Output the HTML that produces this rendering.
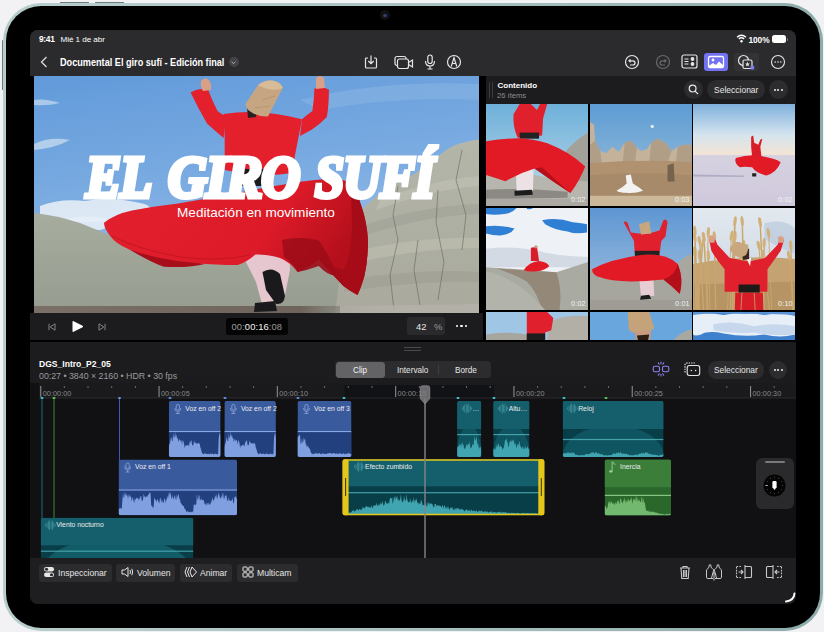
<!DOCTYPE html>
<html><head><meta charset="utf-8">
<style>
*{box-sizing:border-box;margin:0;padding:0}
html,body{width:824px;height:632px;overflow:hidden;background:#f2f2f4}
body{position:relative;font-family:"Liberation Sans",sans-serif;color:#fff}
.a{position:absolute}
#frame{left:2.8px;top:3px;width:820.4px;height:628px;border-radius:38px;background:linear-gradient(90deg,#b6cdcc,#a9c2c1 50%,#8cabaa)}
#bezel{left:6px;top:5.5px;width:814px;height:622.5px;border-radius:35px;background:#000}
#scr{left:0;top:0;width:824px;height:632px;clip-path:inset(30px 28px 28px 30px round 8px);background:#1c1c1e}
.t{position:absolute;white-space:nowrap;line-height:1}
</style></head>
<body>
<div id="frame" class="a"></div>
<div id="bezel" class="a"></div>
<div class="a" style="left:1.8px;top:40px;width:1px;height:50px;border-radius:1px;background:#4a5a62;opacity:0.8"></div>
<div class="a" style="left:60px;top:1.8px;width:29px;height:1px;border-radius:1px;background:#4a5a62;opacity:0.8"></div>
<div class="a" style="left:95px;top:1.8px;width:29px;height:1px;border-radius:1px;background:#4a5a62;opacity:0.8"></div>

<div class="a" style="left:380px;top:10px;width:10px;height:10px;border-radius:50%;background:#111;"></div>
<div class="a" style="left:383px;top:13.5px;width:4px;height:3px;border-radius:50%;background:#34407a;"></div>

<div id="scr" class="a">
  <!-- top bar -->
  <div class="a" style="left:30px;top:30px;width:766px;height:46px;background:#2b2b2d"></div>
  
  <!-- status -->
  <div class="t" style="left:39px;top:35px;font-size:8.4px;font-weight:bold;letter-spacing:-0.3px">9:41</div>
  <div class="t" style="left:60.5px;top:35.5px;font-size:8.1px;letter-spacing:-0.05px">Mié 1 de abr</div>
  <div class="t" style="left:748.5px;top:35.5px;font-size:8.4px;font-weight:bold;letter-spacing:-0.1px">100%</div>
  <svg class="a" style="left:736px;top:34px" width="11" height="9" viewBox="0 0 11 9"><path d="M1 3.2 Q5.5 -0.8 10 3.2" stroke="#fff" stroke-width="1.3" fill="none"/><path d="M2.8 5 Q5.5 2.6 8.2 5" stroke="#fff" stroke-width="1.3" fill="none"/><circle cx="5.5" cy="7.2" r="1.2" fill="#fff"/></svg>
  <div class="a" style="left:772px;top:35px;width:14px;height:8px;border-radius:2.5px;background:#fff"></div>
  <div class="a" style="left:787px;top:37.5px;width:1.2px;height:3px;border-radius:1px;background:#777"></div>
  <!-- title -->
  <svg class="a" style="left:40px;top:56px" width="8" height="12" viewBox="0 0 8 12"><path d="M6.5 1 L1.5 6 L6.5 11" stroke="#ddd" stroke-width="1.3" fill="none"/></svg>
  <div class="t" style="left:60px;top:57px;font-size:10.6px;font-weight:bold;transform:scaleX(0.862);transform-origin:0 0">Documental El giro sufí - Edición final</div>
  <div class="a" style="left:229px;top:57.3px;width:9.8px;height:9.8px;border-radius:50%;background:#444446"></div>
  <svg class="a" style="left:228.4px;top:56.7px" width="11" height="11" viewBox="0 0 11 11"><path d="M3.6 4.8 L5.5 6.6 L7.4 4.8" stroke="#b0b0b2" stroke-width="1" fill="none"/></svg>
  <!-- center icons -->
  <svg class="a" style="left:363px;top:54px" width="16" height="16" viewBox="0 0 16 16" fill="none" stroke="#e6e6e6" stroke-width="1.2"><path d="M5 4 H3.5 Q2.5 4 2.5 5 V13 Q2.5 14 3.5 14 H12.5 Q13.5 14 13.5 13 V5 Q13.5 4 12.5 4 H11"/><path d="M8 1.5 V9.5 M5.3 7 L8 9.7 L10.7 7"/></svg>
  <svg class="a" style="left:394px;top:55px" width="20" height="15" viewBox="0 0 20 15" fill="none" stroke="#e6e6e6" stroke-width="1.2"><rect x="1" y="1.5" width="11" height="9" rx="2"/><rect x="3.5" y="4" width="11" height="9.5" rx="2" fill="#2b2b2d"/><path d="M14.5 7.5 L18.5 5 V12 L14.5 9.5"/></svg>
  <svg class="a" style="left:424px;top:54px" width="12" height="16" viewBox="0 0 12 16" fill="none" stroke="#e6e6e6" stroke-width="1.2"><rect x="3.8" y="1" width="4.4" height="8.5" rx="2.2"/><path d="M1.5 7 Q1.5 12 6 12 Q10.5 12 10.5 7 M6 12 V15 M3.5 15 H8.5"/></svg>
  <svg class="a" style="left:446px;top:54px" width="16" height="16" viewBox="0 0 16 16" fill="none" stroke="#e6e6e6" stroke-width="1.2"><circle cx="8" cy="8" r="6.5"/><path d="M5.2 12.5 L8 3.8 L10.8 12.5 M6.2 9.5 H9.8"/></svg>
  <!-- right icons -->
  <svg class="a" style="left:624px;top:54px" width="16" height="16" viewBox="0 0 16 16" fill="none" stroke="#e6e6e6" stroke-width="1.2"><circle cx="8" cy="8" r="6.5"/><path d="M6.5 5.3 L5 6.8 L6.5 8.3 M5.2 6.8 H8.8 Q11 6.8 11 9 Q11 11 8.8 11 H6"/></svg>
  <svg class="a" style="left:655px;top:54px" width="16" height="16" viewBox="0 0 16 16" fill="none" stroke="#6a6a6c" stroke-width="1.2"><circle cx="8" cy="8" r="6.5"/><path d="M9.5 5.3 L11 6.8 L9.5 8.3 M10.8 6.8 H7.2 Q5 6.8 5 9 Q5 11 7.2 11 H10"/></svg>
  <svg class="a" style="left:681px;top:54px" width="17" height="15" viewBox="0 0 17 15" fill="none" stroke="#e6e6e6" stroke-width="1.2"><rect x="1" y="1" width="15" height="13" rx="2"/><path d="M3.5 5 H7.5 M3.5 7.5 H7.5 M3.5 10 H7.5"/><circle cx="11.5" cy="5" r="1.3" fill="#e6e6e6"/><circle cx="11.5" cy="10" r="1.3" fill="#e6e6e6"/></svg>
  <div class="a" style="left:704px;top:53px;width:24px;height:18px;border-radius:3px;background:#7272f2"></div>
  <svg class="a" style="left:707px;top:55px" width="18" height="14" viewBox="0 0 18 14" fill="none" stroke="#fff" stroke-width="1.3"><rect x="1.5" y="1.5" width="15" height="11" rx="1.5"/><circle cx="6" cy="5" r="1.4" fill="#fff" stroke="none"/><path d="M1.5 11 L6 8 L9 10 L12 6.5 L16.5 10.5 V12.5 H1.5 Z" fill="#fff" stroke="none"/></svg>
  <div class="a" style="left:734px;top:53px;width:25px;height:18px;border-radius:3px;background:#333335"></div>
  <svg class="a" style="left:737px;top:54px" width="18" height="16" viewBox="0 0 18 16" fill="none" stroke="#e6e6e6" stroke-width="1.2"><circle cx="6.5" cy="6.5" r="5"/><rect x="6" y="6" width="9" height="8.5" rx="1.5" fill="#333335"/><path d="M10.5 7.8 L11.2 9.4 L12.8 9.5 L11.6 10.6 L12 12.2 L10.5 11.4 L9 12.2 L9.4 10.6 L8.2 9.5 L9.8 9.4 Z" fill="#e6e6e6" stroke="none"/><circle cx="15.3" cy="13.7" r="2.1" fill="#7c7cf4" stroke="none"/></svg>
  <svg class="a" style="left:769.5px;top:54px" width="16" height="16" viewBox="0 0 16 16" fill="none" stroke="#e6e6e6" stroke-width="1.1"><circle cx="8" cy="8" r="6.5"/><circle cx="5.2" cy="8" r="0.8" fill="#e6e6e6" stroke="none"/><circle cx="8" cy="8" r="0.8" fill="#e6e6e6" stroke="none"/><circle cx="10.8" cy="8" r="0.8" fill="#e6e6e6" stroke="none"/></svg>

  <!-- viewer bg -->
  <div class="a" style="left:30px;top:76px;width:456px;height:266px;background:#000"></div>
  
  <!--VID-->  <svg class="a" style="left:34px;top:76px" width="445" height="237" viewBox="34 76 445 237">
    <defs>
      <linearGradient id="sky" x1="0" y1="0" x2="0.25" y2="1">
        <stop offset="0" stop-color="#619ada"/><stop offset="0.55" stop-color="#7dade2"/><stop offset="1" stop-color="#abc8e8"/>
      </linearGradient>
      <linearGradient id="hillL" x1="0" y1="0" x2="0" y2="1">
        <stop offset="0" stop-color="#a6ad9f"/><stop offset="1" stop-color="#969d90"/>
      </linearGradient>
      <linearGradient id="hillR" x1="0" y1="0" x2="0" y2="1">
        <stop offset="0" stop-color="#b4b6aa"/><stop offset="1" stop-color="#a9a99d"/>
      </linearGradient>
      <linearGradient id="skirt" x1="0" y1="0" x2="1" y2="0.3">
        <stop offset="0" stop-color="#e2202e"/><stop offset="0.7" stop-color="#dc1a28"/><stop offset="1" stop-color="#b50f1c"/>
      </linearGradient>
    </defs>
    <rect x="34" y="76" width="445" height="237" fill="url(#sky)"/>
    <!-- wispy clouds -->
    <path d="M34 100 Q45 98 60 103 Q48 106 34 105 Z" fill="#c8dcf0" opacity="0.7"/>
    <path d="M34 144 Q50 136 70 140 Q55 148 34 150 Z" fill="#d0e0f0" opacity="0.7"/>
    <path d="M40 206 Q60 198 85 201 Q110 196 140 203 Q155 206 150 214 Q120 222 80 222 Q50 222 40 214 Z" fill="#e6eef6" opacity="0.9"/><path d="M60 221 Q80 214 105 218 Q115 226 100 230 Q80 230 60 226 Z" fill="#e6eef6" opacity="0.9"/>
    <path d="M300 100 Q380 80 479 84 L479 100 Q400 96 320 110 Z" fill="#8cb6e4" opacity="0.5"/>
    <!-- left hill / ground -->
    <path d="M34 213 Q55 215 80 223 Q110 235 140 248 Q200 262 260 262 Q320 258 370 250 L479 250 L479 313 L34 313 Z" fill="url(#hillL)"/>
    <!-- right hill -->
    <path d="M335 313 L342 262 Q350 230 363 208 Q380 192 398 182 Q410 176 415 173.5 Q425 165 435.6 159 Q445 150 453 146 Q465 141 479 139.5 L479 313 Z" fill="url(#hillR)"/>
    <path d="M380 200 Q430 180 479 176 L479 186 Q430 190 376 210 Z" fill="#c2c2b6" opacity="0.6"/>
    <path d="M362 226 Q420 206 479 204 L479 214 Q420 216 358 238 Z" fill="#9c9e92" opacity="0.45"/>
    <path d="M352 252 Q420 236 479 238 L479 248 Q420 248 350 264 Z" fill="#c4c2b4" opacity="0.5"/>
    <path d="M346 280 Q420 268 479 272 L479 282 Q420 280 344 292 Z" fill="#9a998e" opacity="0.45"/>
    <g stroke="#5f5c55" stroke-width="0.7" fill="none" opacity="0.75">
      <path d="M398 186 L393 215 L398 240 L390 275 L394 310"/><path d="M438 190 L436 222 L444 262 L438 300"/><path d="M462 150 L456 180 L466 215 L462 250"/><path d="M418 240 L414 270 L420 305"/>
    </g>
    <linearGradient id="gband" x1="0" y1="0" x2="1" y2="0"><stop offset="0" stop-color="#7a7068"/><stop offset="0.6" stop-color="#6e645c"/><stop offset="0.78" stop-color="#8c877e" stop-opacity="0"/></linearGradient><rect x="34" y="306" width="445" height="7" fill="url(#gband)"/>
    <path d="M340 306 L479 304 L479 313 L340 313 Z" fill="#b4b2aa" opacity="0.8"/>
    <!-- under-skirt dark fold -->
    <path d="M128.7 249 Q150 262 164 266.8 Q190 268 205 264 Q170 258 128.7 249 Z" fill="#a80d1a"/>
    <!-- pants -->
    <path d="M245 236 L289 234 L290 270 L284 300 L262 304 L256 282 L246 262 Z" fill="#e6c6cf"/>
    <!-- skirt -->
    <path d="M104 222.8 Q115 214 132 210.5 Q155 206 178 203.4 Q205 199 230.8 194.6 Q260 188 287 184 Q315 179 333 178.8 Q345 179 350.5 184 Q357 192 361 205 Q367 222 368 240.4 Q368 260 364.5 275.6 Q361 288 357.5 295 Q350 291 343.4 286 Q330 272 318.8 259.8 Q308 268 297.7 272 Q290 262 280 258 Q268 254 255.4 254.5 Q247 262 237.8 265 Q215 265 195.6 263 Q178 262 160.4 258 Q142 254 128.7 249.2 Q115 243 111 236.9 Q104 229 104 222.8 Z" fill="url(#skirt)"/>
    <path d="M318.8 259.8 Q330 272 343.4 286 Q350 291 357.5 295 Q361 288 364.5 275.6 Q368 260 368 240.4 Q367 222 361 205 Q357 192 350.5 184 Q352 205 352 230 Q350 262 343 270 Q332 266 318.8 259.8 Z" fill="#a50c18"/>
    <path d="M112 236 Q140 250 180 257 Q220 262 250 255" stroke="#b8101c" stroke-width="1" fill="none" opacity="0.6"/>
    <path d="M282 240 Q300 236 318.8 240.4 Q330 255 336.4 275.6 Q328 276 318.8 266 Q308 270 297.7 272 Q292 262 284 257 Z" fill="#9e0c18" opacity="0.9"/>
    <!-- shoes -->
    <path d="M262.5 272 Q272 266 280 274 L285 296 Q284 305 276 304 L266 290 Z" fill="#1a1a1c"/>
    <path d="M255 303 L275 301 L277 311 L254 312 Z" fill="#1a1a1c"/>
    <!-- torso -->
    <path d="M223.6 114 Q260 108 302 119.3 L296 150 L291.7 173 Q260 178 224.7 170 L224.7 138 Z" fill="#e3202c"/>
    <path d="M238 169 L273 169 L273 186 L238 186 Z" fill="#1c1a1c"/>
    <!-- left arm -->
    <path d="M190.6 92.5 Q198 88 208 89.4 Q212 100 217.5 111 Q221 114 225.7 116 L223.6 138 Q214 130 207 123.5 Q198 108 190.6 92.5 Z" fill="#e3202c"/>
    <!-- right arm -->
    <path d="M314.4 88.4 Q322 86 328.9 89.4 Q329 105 326.8 117 Q320 124 312 129.6 L300 136 L302 119.3 Q308 114 312.4 111 Q314 100 314.4 88.4 Z" fill="#e3202c"/>
    <!-- hands -->
    <path d="M201 81 Q205 76 209 80 Q212 84 211 90 L203 91 Q200 86 201 81 Z" fill="#d9a088"/>
    <path d="M316 78 Q320 74 324 78 L325 88 L316 89 Z" fill="#d9a088"/>
    <!-- face/beard -->
    <path d="M247 107 L256.7 108 L256 117 L248 118 Z" fill="#2a2020"/>
    <!-- hat -->
    <path d="M245.5 104 L258 85 Q264 80 272 80.5 Q281 82 282.8 88 L268 116.5 Q258 117 251 112 Q246 109 245.5 104 Z" fill="#c6a682"/>
    <path d="M258 85 Q264 80 272 80.5 Q281 82 282.8 88 Q276 91 268 89 Q261 87 258 85 Z" fill="#d8bc98"/>
    <path d="M262 100 L275 96 M255 108 L270 106" stroke="#b39270" stroke-width="0.8"/>
  </svg>
<!--/VID-->
  <div class="a" style="left:34px;top:76px;width:445px;height:237px;overflow:hidden">
  <div class="t" style="left:52.2px;top:71.9px;font-family:'Liberation Serif',serif;font-weight:bold;font-style:italic;font-size:60px;letter-spacing:-1px;-webkit-text-stroke:5px #fff;transform-origin:0 0;transform:scale(0.874,0.97)">EL</div>
  <div class="t" style="left:133.6px;top:71.9px;font-family:'Liberation Serif',serif;font-weight:bold;font-style:italic;font-size:60px;letter-spacing:-1px;-webkit-text-stroke:5px #fff;transform-origin:0 0;transform:scale(0.90,0.97)">GIRO</div>
  <div class="t" style="left:281.2px;top:71.9px;font-family:'Liberation Serif',serif;font-weight:bold;font-style:italic;font-size:60px;letter-spacing:-1px;-webkit-text-stroke:5px #fff;transform-origin:0 0;transform:scale(0.873,0.97)">SUFÍ</div>
  <div class="t" style="left:143px;top:130px;font-size:13.6px;">Meditación en movimiento</div>
  </div>

  <!-- controls bar -->
  <div class="a" style="left:30px;top:313px;width:452.6px;height:27px;background:#1c1c1e"></div>
  <svg class="a" style="left:47.5px;top:323px" width="8" height="8" viewBox="0 0 8 8" fill="none" stroke="#8e8e90" stroke-width="0.9" stroke-linejoin="round"><path d="M1 0.8 V7.2 M7 0.8 L2.2 4 L7 7.2 Z"/></svg>
  <svg class="a" style="left:70.5px;top:320px" width="13" height="13" viewBox="0 0 13 13"><path d="M1.5 1.8 Q1.5 0.6 2.6 1.2 L11.6 5.8 Q12.6 6.5 11.6 7.2 L2.6 11.8 Q1.5 12.4 1.5 11.2 Z" fill="#fff"/></svg>
  <svg class="a" style="left:97.5px;top:323px" width="8" height="8" viewBox="0 0 8 8" fill="none" stroke="#8e8e90" stroke-width="0.9" stroke-linejoin="round"><path d="M7 0.8 V7.2 M1 0.8 L5.8 4 L1 7.2 Z"/></svg>
  <div class="a" style="left:225.6px;top:317.6px;width:62.2px;height:17.7px;border-radius:3px;background:#050505"></div>
  <div class="t" style="left:231.5px;top:321.5px;font-size:9.4px;color:#9c9c9e;letter-spacing:0.1px">00:<span style="color:#f4f4f4">00:16</span>:08</div>
  <div class="a" style="left:407px;top:317px;width:38px;height:18px;border-radius:3px;background:#2a2a2c"></div>
  <div class="t" style="left:416px;top:321.5px;font-size:9.4px;color:#e6e6e6">42</div>
  <div class="t" style="left:434px;top:321.5px;font-size:9.4px;color:#9a9a9c">%</div>
  <div class="a" style="left:455.9px;top:324.7px;width:2.6px;height:2.6px;border-radius:50%;background:#fff"></div>
  <div class="a" style="left:460.2px;top:324.7px;width:2.6px;height:2.6px;border-radius:50%;background:#fff"></div>
  <div class="a" style="left:464.5px;top:324.7px;width:2.6px;height:2.6px;border-radius:50%;background:#fff"></div>

  <!-- content header -->
  <div class="a" style="left:486px;top:76px;width:310px;height:266px;background:#000"></div><!--TH--><svg class="a" style="left:486px;top:104px" width="102" height="102" viewBox="0 0 100 100.00" preserveAspectRatio="none"><defs><linearGradient id="t1s" x1="0" y1="0" x2="0" y2="1"><stop offset="0" stop-color="#6eb0da"/><stop offset="1" stop-color="#c0dcea"/></linearGradient></defs>
<rect width="100" height="100" fill="url(#t1s)"/>
<path d="M66 100 L70 58 Q80 40 100 28 L100 100 Z" fill="#a2a29a"/>
<path d="M0 60 Q30 66 60 72 L100 76 L100 100 L0 100 Z" fill="#b6b5ae"/>
<path d="M0 84 Q40 82 80 86 L80 92 Q40 93 0 93 Z" fill="#6a6562" opacity="0.55"/>
<rect x="0" y="93" width="100" height="7" fill="#aba9a2"/>
<path d="M29 54 L47 54 L46 85 L30 86 Z" fill="#ece2e6"/>
<path d="M28 85 L45 84 L46 89 L28 90 Z" fill="#1c1c1c"/>
<path d="M27 10 L33 0 L44 0 L50 6 L53 0 L60 0 L56 14 L55 31 L31 33 Q26 22 27 10 Z" fill="#e0202c"/>
<rect x="33" y="28" width="19" height="6" fill="#222"/>
<path d="M0 36.6 Q16 34 31.3 33.6 Q46 34 60.2 38.6 Q82 47 97.3 61.3 Q92 75 82.8 87.3 Q64 75 47.7 63.3 Q32 68 18.9 75.8 Q8 72 0 69.6 Z" fill="#e21a26"/>
<path d="M47.7 63.3 Q64 75 82.8 87.3 Q70 76 55 62 Z" fill="#b50f1a"/>
</svg><div class="t" style="left:571px;top:196px;font-size:7.2px;color:#f4f4f4;letter-spacing:0.2px">0:02</div>
<svg class="a" style="left:590px;top:104px" width="102" height="102" viewBox="0 0 100 100.00" preserveAspectRatio="none"><defs><linearGradient id="t2s" x1="0" y1="0" x2="0" y2="1"><stop offset="0" stop-color="#5d9cd4"/><stop offset="1" stop-color="#a4c4da"/></linearGradient></defs>
<rect width="100" height="100" fill="url(#t2s)"/>
<circle cx="61" cy="22" r="1.6" fill="#e8eef4"/>
<path d="M0 18 L4 20 L5 36 L10 46 L16 48 L22 42 L28 47 L30 44 L34 38 L40 36 L46 43 L50 46 L56 44 L60 38 L66 34 L74 38 L80 46 L86 42 L92 40 L100 40 L100 100 L0 100 Z" fill="#c4b29a"/>
<path d="M5 36 L10 46 L12 60 L0 62 L0 40 Z M34 38 L40 36 L46 43 L44 58 L32 58 Z M60 38 L66 34 L74 38 L80 46 L76 58 L58 58 Z M86 42 L92 40 L100 40 L100 58 L84 58 Z" fill="#a8947c" opacity="0.65"/>
<path d="M0 58 Q50 54 100 57 L100 100 L0 100 Z" fill="#b09270"/>
<path d="M0 70 Q50 66 100 70 L100 90 L0 90 Z" fill="#9e8262" opacity="0.5"/>
<path d="M76 60 L82 58 L83 76 L76 76 Z" fill="#75634e"/>
<rect x="0" y="90" width="100" height="10" fill="#cbb89a"/>
<path d="M35 70 L40 69 L42 78 Q50 83 52 85 Q44 88 36 87 Q29 87 26 85 Q32 82 36 78 Z" fill="#f2f2f2"/>
</svg><div class="t" style="left:675px;top:196px;font-size:7.2px;color:#f4f4f4;letter-spacing:0.2px">0:03</div>
<svg class="a" style="left:693px;top:104px" width="102" height="102" viewBox="0 0 100 100.00" preserveAspectRatio="none"><defs><linearGradient id="t3s" x1="0" y1="0" x2="0" y2="1"><stop offset="0" stop-color="#7fb0dc"/><stop offset="0.6" stop-color="#d4e4ee"/><stop offset="1" stop-color="#f3e4d4"/></linearGradient>
<linearGradient id="t3g" x1="0" y1="0" x2="0" y2="1"><stop offset="0" stop-color="#d6d2e0"/><stop offset="1" stop-color="#cfc8dc"/></linearGradient></defs>
<rect width="100" height="50" fill="url(#t3s)"/>
<rect y="50" width="100" height="50" fill="url(#t3g)"/>
<path d="M0 69 L50 70 L50 71.5 L0 71 Z" fill="#a0a0bc" opacity="0.7"/>
<path d="M57 32 L59 31 L60 38 L64 40 L66 35 L68 34 L66 42 L67 51 L58 52 L57 42 Z" fill="#d81c28"/>
<path d="M42 53 Q55 49 66 51 Q80 53 86 57 Q82 67 72 70 Q62 68 58 62 Q50 61 46 62 Q40 58 42 53 Z" fill="#e21a26"/>
<path d="M58 68 L62 68 L62 71 L58 71 Z" fill="#222"/></svg><div class="t" style="left:778px;top:196px;font-size:7.2px;color:#f4f4f4;letter-spacing:0.2px">0:02</div>
<svg class="a" style="left:486px;top:208px" width="102" height="102" viewBox="0 0 100 100.00" preserveAspectRatio="none"><rect width="100" height="100" fill="#eef2f6"/>
<path d="M0 0 H30 Q26 5 18 6 Q8 7 0 6 Z" fill="#2f7fd4"/>
<path d="M40 0 H46 Q44 2 40 1 Z" fill="#2f7fd4"/>
<path d="M0 18 Q12 16 28 20 Q24 26 14 27 Q6 27 0 25 Z" fill="#2f80d4"/>
<path d="M55 12 Q70 9 85 14 Q95 15 99 16 L99 24 Q88 26 80 23 Q68 22 58 16 Z" fill="#2f80d4"/>
<path d="M30 42 Q34 40 38 42 Q34 46 30 45 Z" fill="#4a8ed6"/>
<path d="M0 40 Q30 36 60 44 Q80 48 100 48 L100 58 L0 58 Z" fill="#d4dae4"/>
<path d="M0 58 Q35 60 69 63 Q85 58 100 53 L100 100 L0 100 Z" fill="#a9aaa2"/>
<path d="M10 59 Q40 62 69 63 Q75 80 72 100 L55 100 Q50 82 40 72 Q25 64 10 59 Z" fill="#8e7c6a" opacity="0.75"/>
<path d="M0 62 Q30 68 58 100 L0 100 Z" fill="#b2b3ab"/>
<path d="M44 39 L50 38 L52 52 L44 52 Z" fill="#d81c28"/>
<circle cx="49" cy="38" r="1.6" fill="#c89a80"/>
<path d="M37 61 Q42 53 52 52 Q60 53 62 57 Q58 61 50 62 Q42 63 37 61 Z" fill="#e21a26"/></svg><div class="t" style="left:571px;top:300px;font-size:7.2px;color:#f4f4f4;letter-spacing:0.2px">0:02</div>
<svg class="a" style="left:590px;top:208px" width="102" height="102" viewBox="0 0 100 100.00" preserveAspectRatio="none"><defs><linearGradient id="t5s" x1="0" y1="0" x2="0" y2="1"><stop offset="0" stop-color="#5e96d2"/><stop offset="1" stop-color="#a6c4e0"/></linearGradient></defs>
<rect width="100" height="100" fill="url(#t5s)"/>
<path d="M78 100 L80 60 Q90 48 100 45 L100 100 Z" fill="#a8a8a0"/>
<path d="M0 60 Q40 66 80 70 L100 72 L100 100 L0 100 Z" fill="#a6a69e"/>
<rect y="90" width="100" height="10" fill="#9e9c94"/>
<path d="M48 66 L62 64 L63 86 L50 87 Z" fill="#e8ccd4"/>
<path d="M50 86 L58 85 L60 89 L49 90 Z" fill="#1c1c1c"/>
<path d="M33 14 Q36 12 37 15 L40 24 L48 25 L58 25 L68 22 L72 12 Q75 10 76 14 L74 28 L70 32 L68 46 L44 46 L43 32 Z" fill="#e0202c"/>
<path d="M48 16 L58 13 L60 25 L50 26 Z" fill="#c8a67e"/>
<rect x="44" y="42" width="24" height="5" fill="#222"/>
<path d="M2 60 Q20 50 50 46 Q75 44 86 55 Q92 70 88 84 Q80 76 72 70 Q55 72 40 72 Q20 72 10 68 Q2 66 2 60 Z" fill="#e21a26"/>
<path d="M72 70 Q80 76 88 84 Q92 70 86 55 Q84 66 72 70 Z" fill="#b30f1a"/></svg><div class="t" style="left:675px;top:300px;font-size:7.2px;color:#f4f4f4;letter-spacing:0.2px">0:01</div>
<svg class="a" style="left:693px;top:208px" width="102" height="102" viewBox="0 0 100 100.00" preserveAspectRatio="none"><defs><linearGradient id="t6s" x1="0" y1="0" x2="0" y2="1"><stop offset="0" stop-color="#e2e8ee"/><stop offset="1" stop-color="#c8d4e2"/></linearGradient></defs>
<rect width="100" height="100" fill="url(#t6s)"/>
<path d="M70 15 Q90 10 100 20 L100 45 Q85 40 70 30 Z" fill="#b4c4d8" opacity="0.6"/>
<path d="M0 55 Q50 45 100 50 L100 100 L0 100 Z" fill="#c4a272"/>
<path d="M0 75 L100 72 L100 100 L0 100 Z" fill="#b08e5c" opacity="0.7"/>
<path d="M47.5 100 Q48.5 66.2 49.5 32.3" stroke="#c9a66e" stroke-width="0.91" fill="none"/><ellipse cx="49.5" cy="36.3" rx="1.6" ry="5" fill="#d2b07a" transform="rotate(6 49.5 36.3)"/><path d="M1.1 100 Q-0.3 60.9 -1.6 21.9" stroke="#c9a66e" stroke-width="1.45" fill="none"/><ellipse cx="-1.6" cy="25.9" rx="1.6" ry="5" fill="#d2b07a" transform="rotate(-8 -1.6 25.9)"/><path d="M69.1 100 Q69.4 65.1 69.8 30.3" stroke="#c9a66e" stroke-width="1.33" fill="none"/><ellipse cx="69.8" cy="34.3" rx="1.6" ry="5" fill="#d2b07a" transform="rotate(2 69.8 34.3)"/><path d="M14.5 100 Q12.5 62.1 10.5 24.3" stroke="#c9a66e" stroke-width="1.52" fill="none"/><ellipse cx="10.5" cy="28.3" rx="1.6" ry="5" fill="#d2b07a" transform="rotate(-12 10.5 28.3)"/><path d="M5.9 100 Q3.3 69.1 0.8 38.3" stroke="#c9a66e" stroke-width="1.35" fill="none"/><ellipse cx="0.8" cy="42.3" rx="1.6" ry="5" fill="#d2b07a" transform="rotate(-15 0.8 42.3)"/><path d="M33.7 100 Q35.8 61.5 37.8 23.0" stroke="#c9a66e" stroke-width="0.81" fill="none"/><ellipse cx="37.8" cy="27.0" rx="1.6" ry="5" fill="#d2b07a" transform="rotate(12 37.8 27.0)"/><path d="M6.1 100 Q6.1 70.9 6.2 41.9" stroke="#c9a66e" stroke-width="0.87" fill="none"/><ellipse cx="6.2" cy="45.9" rx="1.6" ry="5" fill="#d2b07a" transform="rotate(0 6.2 45.9)"/><path d="M98.7 100 Q96.4 71.5 94.1 43.0" stroke="#c9a66e" stroke-width="1.14" fill="none"/><ellipse cx="94.1" cy="47.0" rx="1.6" ry="5" fill="#d2b07a" transform="rotate(-14 94.1 47.0)"/><path d="M13.5 100 Q14.2 59.8 15.0 19.6" stroke="#c9a66e" stroke-width="0.93" fill="none"/><ellipse cx="15.0" cy="23.6" rx="1.6" ry="5" fill="#d2b07a" transform="rotate(4 15.0 23.6)"/><path d="M69.7 100 Q67.7 55.0 65.7 9.9" stroke="#c9a66e" stroke-width="1.45" fill="none"/><ellipse cx="65.7" cy="13.9" rx="1.6" ry="5" fill="#d2b07a" transform="rotate(-12 65.7 13.9)"/><path d="M40.1 100 Q40.6 61.7 41.2 23.5" stroke="#c9a66e" stroke-width="1.18" fill="none"/><ellipse cx="41.2" cy="27.5" rx="1.6" ry="5" fill="#d2b07a" transform="rotate(3 41.2 27.5)"/><path d="M38.5 100 Q39.8 54.6 41.2 9.1" stroke="#c9a66e" stroke-width="1.57" fill="none"/><ellipse cx="41.2" cy="13.1" rx="1.6" ry="5" fill="#d2b07a" transform="rotate(8 41.2 13.1)"/><path d="M97.6 100 Q96.8 66.3 95.9 32.6" stroke="#c9a66e" stroke-width="1.09" fill="none"/><ellipse cx="95.9" cy="36.6" rx="1.6" ry="5" fill="#d2b07a" transform="rotate(-5 95.9 36.6)"/><path d="M69.0 100 Q66.7 66.5 64.4 32.9" stroke="#c9a66e" stroke-width="0.99" fill="none"/><ellipse cx="64.4" cy="36.9" rx="1.6" ry="5" fill="#d2b07a" transform="rotate(-14 64.4 36.9)"/><path d="M36.3 100 Q38.2 63.5 40.1 26.9" stroke="#c9a66e" stroke-width="1.20" fill="none"/><ellipse cx="40.1" cy="30.9" rx="1.6" ry="5" fill="#d2b07a" transform="rotate(11 40.1 30.9)"/><path d="M2.8 100 Q2.4 69.2 2.0 38.4" stroke="#c9a66e" stroke-width="1.22" fill="none"/><ellipse cx="2.0" cy="42.4" rx="1.6" ry="5" fill="#d2b07a" transform="rotate(-3 2.0 42.4)"/><path d="M22.2 100 Q21.5 61.9 20.9 23.8" stroke="#c9a66e" stroke-width="1.42" fill="none"/><ellipse cx="20.9" cy="27.8" rx="1.6" ry="5" fill="#d2b07a" transform="rotate(-4 20.9 27.8)"/><path d="M10.3 100 Q8.3 64.2 6.4 28.3" stroke="#c9a66e" stroke-width="1.36" fill="none"/><ellipse cx="6.4" cy="32.3" rx="1.6" ry="5" fill="#d2b07a" transform="rotate(-12 6.4 32.3)"/><path d="M3.7 100 Q2.7 59.1 1.8 18.2" stroke="#c9a66e" stroke-width="1.31" fill="none"/><ellipse cx="1.8" cy="22.2" rx="1.6" ry="5" fill="#d2b07a" transform="rotate(-6 1.8 22.2)"/><path d="M5.2 100 Q3.5 62.5 1.7 25.0" stroke="#c9a66e" stroke-width="1.03" fill="none"/><ellipse cx="1.7" cy="29.0" rx="1.6" ry="5" fill="#d2b07a" transform="rotate(-10 1.7 29.0)"/><path d="M47.6 100 Q47.5 71.7 47.4 43.5" stroke="#c9a66e" stroke-width="1.56" fill="none"/><ellipse cx="47.4" cy="47.5" rx="1.6" ry="5" fill="#d2b07a" transform="rotate(-1 47.4 47.5)"/><path d="M16.8 100 Q15.9 71.1 15.1 42.2" stroke="#c9a66e" stroke-width="0.95" fill="none"/><ellipse cx="15.1" cy="46.2" rx="1.6" ry="5" fill="#d2b07a" transform="rotate(-5 15.1 46.2)"/><path d="M74.9 100 Q71.9 70.9 68.9 41.7" stroke="#c9a66e" stroke-width="1.01" fill="none"/><ellipse cx="68.9" cy="45.7" rx="1.6" ry="5" fill="#d2b07a" transform="rotate(-18 68.9 45.7)"/><path d="M77.1 100 Q75.5 60.3 74.0 20.6" stroke="#c9a66e" stroke-width="0.81" fill="none"/><ellipse cx="74.0" cy="24.6" rx="1.6" ry="5" fill="#d2b07a" transform="rotate(-9 74.0 24.6)"/><path d="M4.0 100 Q6.9 65.5 9.8 30.9" stroke="#c9a66e" stroke-width="1.60" fill="none"/><ellipse cx="9.8" cy="34.9" rx="1.6" ry="5" fill="#d2b07a" transform="rotate(17 9.8 34.9)"/><path d="M50.4 100 Q49.3 54.4 48.2 8.9" stroke="#c9a66e" stroke-width="1.43" fill="none"/><ellipse cx="48.2" cy="12.9" rx="1.6" ry="5" fill="#d2b07a" transform="rotate(-6 48.2 12.9)"/>
<path d="M15.6 30 Q19 27 21.8 31 L24 36 L36 49 L52 52 L57 52 L70.6 49 L83 36 L85 31 Q88 28 89 32 L86 42 L76 56 L73 60 L73 82 L31 82 L31 60 Q24 52 18 42 Z" fill="#e0202c"/>
<path d="M15.6 28 Q18 25 21.8 29 L21 34 L16 34 Z" fill="#d9a088"/>
<path d="M83 29 Q86 26 89 29 L89 34 L84 34 Z" fill="#d9a088"/>
<path d="M52 49 L57 49 L56 57 Z" fill="#f0f0f0"/>
<path d="M47 40 L55 40 L55 50 L49 51 Z" fill="#3a2820"/>
<path d="M36 40 Q38 34 44 33 L54 36 Q55 40 52 46 L46 49 Q38 46 36 40 Z" fill="#c8a67e"/>
<rect x="44.7" y="75" width="20.7" height="8" fill="#1e1a18"/>
<path d="M41.5 83 L68.5 83 L69 100 L41 100 Z" fill="#d81c28"/>
<path d="M48 83 L47 100 M60 83 L61 100" stroke="#c9a66e" stroke-width="1" opacity="0.8"/></svg><div class="t" style="left:778px;top:300px;font-size:7.2px;color:#f4f4f4;letter-spacing:0.2px">0:10</div>
<svg class="a" style="left:486px;top:312px" width="102" height="28" viewBox="0 0 100 27.45" preserveAspectRatio="none"><rect width="100" height="27.5" fill="#9fc6e4"/>
<path d="M60 27.5 L62 10 Q75 2 100 4 L100 27.5 Z" fill="#b2b0a6"/>
<path d="M0 22 Q20 18 45 23 L45 27.5 L0 27.5 Z" fill="#a6a69e"/>
<path d="M40 0 L60 0 L66 6 L64 18 L58 20 L58 27.5 L40 27.5 Z" fill="#e0202c"/>
<rect x="40" y="21" width="18" height="6.5" fill="#1e1e1e"/></svg>
<svg class="a" style="left:590px;top:312px" width="102" height="28" viewBox="0 0 100 27.45" preserveAspectRatio="none"><rect width="100" height="27.5" fill="#6aa6de"/>
<path d="M82 27.5 Q88 20 100 17 L100 27.5 Z" fill="#a8a8a0"/>
<path d="M37 0 L58 0 L63 16 Q56 21 46 21 Q39 20 38 17 Z" fill="#c4a27a"/>
<path d="M44 19 L60 18 L59 27.5 L45 27.5 Z" fill="#c89a80"/>
<path d="M46 23 L58 22 L57 27.5 L47 27.5 Z" fill="#2a1e18"/></svg>
<svg class="a" style="left:693px;top:312px" width="102" height="28" viewBox="0 0 100 27.45" preserveAspectRatio="none"><rect width="100" height="27.5" fill="#3f80cc"/>
<path d="M0 2 Q15 0 30 3 Q50 -1 70 3 Q88 0 100 4 L100 22 Q85 26 70 22 Q50 25 30 21 Q15 18 8 22 Q2 24 0 22 Z" fill="#e6eef8"/>
<path d="M20 12 Q40 8 60 14 Q80 10 100 14 L100 22 Q80 24 60 20 Q40 22 20 18 Z" fill="#c8d8ec"/>
<path d="M0 0 L100 0 L100 3 Q70 1 50 2 Q20 0 0 3 Z" fill="#5a94d6"/></svg><!--/TH-->
  <div class="a" style="left:486px;top:76px;width:310px;height:28px;background:#1c1c1e"></div>
  <div class="a" style="left:489.3px;top:82.4px;width:0.9px;height:15.4px;background:#3c3c3e"></div><div class="a" style="left:492.1px;top:82.4px;width:0.9px;height:15.4px;background:#3c3c3e"></div>
  <div class="t" style="left:497.5px;top:81.5px;font-size:8px;font-weight:bold">Contenido</div>
  <div class="t" style="left:497px;top:91.5px;font-size:7.6px;color:#8e8e90">26 ítems</div>
  <div class="a" style="left:684px;top:80px;width:19px;height:19px;border-radius:50%;background:#2c2c2e"></div>
  <svg class="a" style="left:688px;top:84px" width="11" height="11" viewBox="0 0 11 11" fill="none" stroke="#e6e6e6" stroke-width="1.2"><circle cx="4.6" cy="4.6" r="3.4"/><path d="M7.1 7.1 L10 10"/></svg>
  <div class="a" style="left:707px;top:80px;width:58px;height:19px;border-radius:9.5px;background:#2c2c2e"></div>
  <div class="t" style="left:714px;top:86px;font-size:8.5px;color:#e6e6e6">Seleccionar</div>
  <div class="a" style="left:768.5px;top:80px;width:19px;height:19px;border-radius:50%;background:#2c2c2e"></div>
  <div class="a" style="left:773.5px;top:88.5px;width:2.2px;height:2.2px;border-radius:50%;background:#eee"></div>
  <div class="a" style="left:777px;top:88.5px;width:2.2px;height:2.2px;border-radius:50%;background:#eee"></div>
  <div class="a" style="left:780.5px;top:88.5px;width:2.2px;height:2.2px;border-radius:50%;background:#eee"></div>

  <!-- timeline header -->
  <div class="a" style="left:30px;top:342px;width:766px;height:41px;background:#1c1c1e"></div>
  <div class="a" style="left:404px;top:347px;width:17px;height:1.2px;background:#4a4a4c"></div>
  <div class="a" style="left:404px;top:350px;width:17px;height:1.2px;background:#4a4a4c"></div>
  <div class="t" style="left:39px;top:360px;font-size:9.3px;font-weight:bold;transform:scaleX(0.92);transform-origin:0 0">DGS_Intro_P2_05</div>
  <div class="t" style="left:39px;top:371.5px;font-size:8.8px;color:#9a9a9c">00:27 • 3840 × 2160 • HDR • 30 fps</div>
  <div class="a" style="left:335.2px;top:361.2px;width:155.8px;height:17px;border-radius:4px;background:#2c2c2e"></div>
  <div class="a" style="left:335.7px;top:361.7px;width:49.6px;height:16px;border-radius:3.5px;background:#636366"></div>
  <div class="a" style="left:438.4px;top:365px;width:0.8px;height:9.5px;background:#3e3e40"></div>
  <div class="t" style="left:353px;top:367px;font-size:8.2px;color:#f2f2f2">Clip</div>
  <div class="t" style="left:397px;top:367px;font-size:8.2px;color:#e6e6e6">Intervalo</div>
  <div class="t" style="left:455px;top:367px;font-size:8.2px;color:#e6e6e6">Borde</div>
  <svg class="a" style="left:652px;top:361px" width="18" height="16" viewBox="0 0 18 16" fill="none" stroke="#8c84f0" stroke-width="1.1" stroke-linecap="round"><rect x="1.2" y="5.2" width="6.3" height="5.6" rx="1.8"/><rect x="10.5" y="5.2" width="6.3" height="5.6" rx="1.8"/><path d="M9 1 V2.8 M6.3 1.8 L7.2 3.2 M11.7 1.8 L10.8 3.2 M9 13.2 V15 M6.3 14.2 L7.2 12.8 M11.7 14.2 L10.8 12.8"/></svg>
  <svg class="a" style="left:682.5px;top:361px" width="18" height="16" viewBox="0 0 18 16" fill="none" stroke="#e6e6e6" stroke-width="1.1"><path d="M2 11.5 V4 Q2 2 4 2 H12.5" stroke-dasharray="1.4 1"/><rect x="4.2" y="4.5" width="12.5" height="10" rx="2.2"/><circle cx="8.3" cy="9.5" r="0.75" fill="#e6e6e6" stroke="none"/><circle cx="12.6" cy="9.5" r="0.75" fill="#e6e6e6" stroke="none"/></svg>
  <div class="a" style="left:708px;top:361px;width:56px;height:17.5px;border-radius:8.75px;background:#2c2c2e"></div>
  <div class="t" style="left:714px;top:365.5px;font-size:8.4px;color:#e6e6e6">Seleccionar</div>
  <div class="a" style="left:769px;top:361px;width:18px;height:18px;border-radius:50%;background:#2c2c2e"></div>
  <div class="a" style="left:773.5px;top:369px;width:2.2px;height:2.2px;border-radius:50%;background:#eee"></div>
  <div class="a" style="left:777px;top:369px;width:2.2px;height:2.2px;border-radius:50%;background:#eee"></div>
  <div class="a" style="left:780.5px;top:369px;width:2.2px;height:2.2px;border-radius:50%;background:#eee"></div>

  <!-- ruler -->
  <div class="a" style="left:30px;top:383px;width:766px;height:15px;background:#18181a"></div>
  <!-- tracks -->
  <div class="a" style="left:30px;top:398px;width:766px;height:160px;background:#111113"></div><!--TL--><svg class="a" style="left:30px;top:383px" width="766" height="175" viewBox="30 383 766 175">
<rect x="39" y="383" width="757" height="15" fill="#1a1a1c"/>
<rect x="30" y="383" width="9" height="15" fill="#111113"/>
<rect x="39" y="397.5" width="757" height="1" fill="#2a2a2c"/>
<rect x="344.6" y="384" width="149.4" height="13.5" fill="#111216"/>
<path d="M344.6 384.3 H494" stroke="#3a3a3e" stroke-width="0.6" stroke-dasharray="1.2 1"/>
<rect x="40.20" y="386" width="1.1" height="11" fill="#8a8a8c"/>
<rect x="63.86" y="386" width="1" height="2" fill="#6a6a6c"/>
<rect x="87.52" y="386" width="1" height="2" fill="#6a6a6c"/>
<rect x="111.18" y="386" width="1" height="2" fill="#6a6a6c"/>
<rect x="134.84" y="386" width="1" height="2" fill="#6a6a6c"/>
<rect x="158.50" y="386" width="1.1" height="11" fill="#8a8a8c"/>
<rect x="182.16" y="386" width="1" height="2" fill="#6a6a6c"/>
<rect x="205.82" y="386" width="1" height="2" fill="#6a6a6c"/>
<rect x="229.48" y="386" width="1" height="2" fill="#6a6a6c"/>
<rect x="253.14" y="386" width="1" height="2" fill="#6a6a6c"/>
<rect x="276.80" y="386" width="1.1" height="11" fill="#8a8a8c"/>
<rect x="300.46" y="386" width="1" height="2" fill="#6a6a6c"/>
<rect x="324.12" y="386" width="1" height="2" fill="#6a6a6c"/>
<rect x="347.78" y="386" width="1" height="2" fill="#6a6a6c"/>
<rect x="371.44" y="386" width="1" height="2" fill="#6a6a6c"/>
<rect x="395.10" y="386" width="1.1" height="11" fill="#8a8a8c"/>
<rect x="418.76" y="386" width="1" height="2" fill="#6a6a6c"/>
<rect x="442.42" y="386" width="1" height="2" fill="#6a6a6c"/>
<rect x="466.08" y="386" width="1" height="2" fill="#6a6a6c"/>
<rect x="489.74" y="386" width="1" height="2" fill="#6a6a6c"/>
<rect x="513.40" y="386" width="1.1" height="11" fill="#8a8a8c"/>
<rect x="537.06" y="386" width="1" height="2" fill="#6a6a6c"/>
<rect x="560.72" y="386" width="1" height="2" fill="#6a6a6c"/>
<rect x="584.38" y="386" width="1" height="2" fill="#6a6a6c"/>
<rect x="608.04" y="386" width="1" height="2" fill="#6a6a6c"/>
<rect x="631.70" y="386" width="1.1" height="11" fill="#8a8a8c"/>
<rect x="655.36" y="386" width="1" height="2" fill="#6a6a6c"/>
<rect x="679.02" y="386" width="1" height="2" fill="#6a6a6c"/>
<rect x="702.68" y="386" width="1" height="2" fill="#6a6a6c"/>
<rect x="726.34" y="386" width="1" height="2" fill="#6a6a6c"/>
<rect x="750.00" y="386" width="1.1" height="11" fill="#8a8a8c"/>
<rect x="773.66" y="386" width="1" height="2" fill="#6a6a6c"/>
<text x="42.7" y="395.6" font-size="7.2" fill="#8a8a8c" font-family="Liberation Sans" letter-spacing="0.1">00:00:00</text>
<text x="161.0" y="395.6" font-size="7.2" fill="#8a8a8c" font-family="Liberation Sans" letter-spacing="0.1">00:00:05</text>
<text x="279.3" y="395.6" font-size="7.2" fill="#8a8a8c" font-family="Liberation Sans" letter-spacing="0.1">00:00:10</text>
<text x="397.6" y="395.6" font-size="7.2" fill="#8a8a8c" font-family="Liberation Sans" letter-spacing="0.1">00:00:15</text>
<text x="515.9" y="395.6" font-size="7.2" fill="#8a8a8c" font-family="Liberation Sans" letter-spacing="0.1">00:00:20</text>
<text x="634.2" y="395.6" font-size="7.2" fill="#8a8a8c" font-family="Liberation Sans" letter-spacing="0.1">00:00:25</text>
<text x="752.5" y="395.6" font-size="7.2" fill="#8a8a8c" font-family="Liberation Sans" letter-spacing="0.1">00:00:30</text>
<rect x="41.5" y="398" width="1" height="160" fill="#1f6f78"/>
<rect x="53.5" y="398" width="1" height="160" fill="#3a8a3a"/>
<rect x="119" y="398" width="1" height="62" fill="#3c5ea8"/>
<rect x="40.5" y="397" width="3" height="2" rx="1" fill="#3fc3d3"/>
<rect x="52.5" y="397" width="3" height="2" rx="1" fill="#58c858"/>
<rect x="118.0" y="397" width="3" height="2" rx="1" fill="#5b8fe8"/>
<rect x="168.5" y="397" width="3" height="2" rx="1" fill="#5b8fe8"/>
<rect x="223.5" y="397" width="3" height="2" rx="1" fill="#5b8fe8"/>
<rect x="296.5" y="397" width="3" height="2" rx="1" fill="#5b8fe8"/>
<rect x="342.5" y="397" width="3" height="2" rx="1" fill="#3fc3d3"/>
<rect x="456.5" y="397" width="3" height="2" rx="1" fill="#3fc3d3"/>
<rect x="492.5" y="397" width="3" height="2" rx="1" fill="#3fc3d3"/>
<rect x="562.5" y="397" width="3" height="2" rx="1" fill="#3fc3d3"/>
<rect x="604.5" y="397" width="3" height="2" rx="1" fill="#58c858"/>
<g><clipPath id="c168_401"><rect x="168.8" y="401" width="51.79999999999998" height="56" rx="2"/></clipPath>
<g clip-path="url(#c168_401)">
<rect x="168.8" y="401" width="51.79999999999998" height="56" fill="#3a5a9e"/>
<rect x="168.8" y="431.5" width="51.79999999999998" height="25.5" fill="#223f7e"/>
<rect x="168.8" y="431.0" width="51.79999999999998" height="1.1" fill="#87a6e2"/>
<path d="M168.8 457.0 L168.8 447.6 L169.4 443.9 L170.1 442.7 L170.7 438.7 L171.3 436.7 L172.0 441.0 L172.6 441.0 L173.2 433.0 L173.9 437.8 L174.5 437.5 L175.1 431.4 L175.7 436.9 L176.4 434.5 L177.0 438.3 L177.6 437.7 L178.3 442.2 L178.9 439.3 L179.5 439.3 L180.2 441.6 L180.8 440.1 L181.4 440.6 L182.1 444.7 L182.7 440.0 L183.3 441.1 L184.0 443.1 L184.6 448.6 L185.2 444.7 L185.9 446.6 L186.5 445.4 L187.1 444.7 L187.8 445.4 L188.4 444.5 L189.0 446.9 L189.6 441.0 L190.3 443.2 L190.9 440.2 L191.5 440.5 L192.2 445.4 L192.8 445.2 L193.4 444.7 L194.1 440.0 L194.7 443.3 L195.3 442.1 L196.0 444.1 L196.6 442.9 L197.2 443.6 L197.9 443.8 L198.5 442.4 L199.1 443.4 L199.8 444.0 L200.4 447.4 L201.0 449.0 L201.6 451.7 L202.3 453.3 L202.9 453.7 L203.5 454.4 L204.2 453.5 L204.8 453.3 L205.4 453.4 L206.1 453.9 L206.7 453.7 L207.3 454.3 L208.0 453.5 L208.6 453.8 L209.2 454.2 L209.9 454.5 L210.5 453.5 L211.1 453.3 L211.8 454.5 L212.4 453.5 L213.0 454.1 L213.7 454.4 L214.3 454.2 L214.9 453.6 L215.5 453.4 L216.2 454.6 L216.8 453.8 L217.4 454.6 L218.1 453.7 L218.7 438.5 L219.3 433.7 L220.0 432.8 L220.6 437.0 L220.6 457.0 Z" fill="#7f9fe0"/>
</g></g>
<g fill="none" stroke="#8fa6d8" stroke-width="0.8"><rect x="176.20000000000002" y="404.4" width="3.2" height="5.6" rx="1.6"/><path d="M174.8 408 Q174.8 411.5 177.8 411.5 Q180.8 411.5 180.8 408 M177.8 411.5 V413.5 M175.8 413.5 H179.8"/></g>
<text x="185.3" y="410.6" font-size="6.8" fill="#ececec" font-family="Liberation Sans">Voz en off 2</text>
<g><clipPath id="c224_401"><rect x="224.4" y="401" width="51.49999999999997" height="56" rx="2"/></clipPath>
<g clip-path="url(#c224_401)">
<rect x="224.4" y="401" width="51.49999999999997" height="56" fill="#3a5a9e"/>
<rect x="224.4" y="431.5" width="51.49999999999997" height="25.5" fill="#223f7e"/>
<rect x="224.4" y="431.0" width="51.49999999999997" height="1.1" fill="#87a6e2"/>
<path d="M224.4 457.0 L224.4 447.6 L225.0 443.9 L225.7 442.7 L226.3 438.7 L226.9 436.7 L227.5 441.0 L228.2 441.0 L228.8 433.0 L229.4 437.8 L230.1 437.5 L230.7 431.4 L231.3 436.9 L231.9 434.5 L232.6 438.3 L233.2 437.7 L233.8 442.2 L234.4 439.3 L235.1 439.3 L235.7 441.6 L236.3 440.1 L237.0 440.6 L237.6 444.7 L238.2 440.0 L238.8 441.1 L239.5 443.1 L240.1 448.6 L240.7 444.7 L241.4 446.6 L242.0 445.4 L242.6 444.7 L243.2 445.4 L243.9 444.5 L244.5 446.9 L245.1 441.0 L245.8 443.2 L246.4 440.2 L247.0 440.5 L247.6 445.4 L248.3 445.2 L248.9 444.7 L249.5 440.0 L250.1 443.3 L250.8 442.1 L251.4 444.1 L252.0 442.9 L252.7 443.6 L253.3 443.8 L253.9 442.4 L254.5 443.4 L255.2 444.0 L255.8 447.4 L256.4 449.0 L257.1 451.7 L257.7 453.3 L258.3 453.7 L258.9 454.4 L259.6 453.5 L260.2 453.3 L260.8 453.4 L261.5 453.9 L262.1 453.7 L262.7 454.3 L263.3 453.5 L264.0 453.8 L264.6 454.2 L265.2 454.5 L265.9 453.5 L266.5 453.3 L267.1 454.5 L267.7 453.5 L268.4 454.1 L269.0 454.4 L269.6 454.2 L270.2 453.6 L270.9 453.4 L271.5 454.6 L272.1 453.8 L272.8 454.6 L273.4 453.7 L274.0 438.5 L274.6 433.7 L275.3 432.8 L275.9 437.0 L275.9 457.0 Z" fill="#7f9fe0"/>
</g></g>
<g fill="none" stroke="#8fa6d8" stroke-width="0.8"><rect x="231.8" y="404.4" width="3.2" height="5.6" rx="1.6"/><path d="M230.4 408 Q230.4 411.5 233.4 411.5 Q236.4 411.5 236.4 408 M233.4 411.5 V413.5 M231.4 413.5 H235.4"/></g>
<text x="240.9" y="410.6" font-size="6.8" fill="#ececec" font-family="Liberation Sans">Voz en off 2</text>
<g><clipPath id="c297_401"><rect x="297.5" y="401" width="54.0" height="56" rx="2"/></clipPath>
<g clip-path="url(#c297_401)">
<rect x="297.5" y="401" width="54.0" height="56" fill="#3a5a9e"/>
<rect x="297.5" y="431.5" width="54.0" height="25.5" fill="#223f7e"/>
<rect x="297.5" y="431.0" width="54.0" height="1.1" fill="#87a6e2"/>
<path d="M297.5 457.0 L297.5 438.3 L298.1 435.4 L298.8 437.1 L299.4 434.9 L300.0 434.7 L300.6 443.7 L301.3 444.1 L301.9 438.1 L302.5 442.3 L303.2 442.5 L303.8 437.0 L304.4 440.8 L305.0 438.1 L305.7 444.3 L306.3 444.2 L306.9 447.5 L307.5 446.0 L308.2 445.9 L308.8 448.2 L309.4 448.2 L310.1 449.4 L310.7 451.9 L311.3 453.3 L311.9 453.6 L312.6 454.0 L313.2 454.4 L313.8 453.2 L314.5 453.7 L315.1 453.4 L315.7 453.2 L316.3 453.4 L317.0 453.1 L317.6 453.9 L318.2 453.3 L318.8 453.8 L319.5 453.1 L320.1 453.2 L320.7 454.3 L321.4 454.2 L322.0 454.1 L322.6 453.0 L323.2 453.8 L323.9 453.5 L324.5 454.0 L325.1 453.7 L325.8 453.9 L326.4 453.9 L327.0 453.6 L327.6 453.6 L328.3 453.1 L328.9 453.4 L329.5 453.1 L330.2 453.2 L330.8 453.0 L331.4 453.5 L332.0 454.2 L332.7 453.2 L333.3 453.0 L333.9 453.1 L334.5 453.6 L335.2 453.4 L335.8 454.1 L336.4 453.2 L337.1 453.6 L337.7 454.0 L338.3 454.3 L338.9 453.2 L339.6 453.0 L340.2 454.3 L340.8 453.3 L341.5 453.8 L342.1 454.2 L342.7 454.0 L343.3 453.3 L344.0 453.2 L344.6 454.4 L345.2 453.5 L345.8 454.4 L346.5 453.4 L347.1 454.0 L347.7 453.2 L348.4 453.0 L349.0 453.7 L349.6 453.0 L350.2 454.0 L350.9 454.3 L351.5 453.6 L351.5 457.0 Z" fill="#7f9fe0"/>
</g></g>
<g fill="none" stroke="#8fa6d8" stroke-width="0.8"><rect x="304.9" y="404.4" width="3.2" height="5.6" rx="1.6"/><path d="M303.5 408 Q303.5 411.5 306.5 411.5 Q309.5 411.5 309.5 408 M306.5 411.5 V413.5 M304.5 413.5 H308.5"/></g>
<text x="314.0" y="410.6" font-size="6.8" fill="#ececec" font-family="Liberation Sans">Voz en off 3</text>
<g><clipPath id="c457_401"><rect x="457.1" y="401" width="24.19999999999999" height="56" rx="2"/></clipPath>
<g clip-path="url(#c457_401)">
<rect x="457.1" y="401" width="24.19999999999999" height="56" fill="#083e48"/>
<ellipse cx="469.2" cy="456" rx="12.6" ry="30.8" fill="#0e5561"/>
<rect x="457.1" y="401" width="24.19999999999999" height="28" fill="#145f6b"/>
<rect x="457.1" y="434.0" width="24.19999999999999" height="1.2" fill="#4aa8b3" opacity="0.9"/>
<path d="M457.1 457.0 L457.1 447.5 L457.7 446.9 L458.4 446.7 L459.0 445.2 L459.6 445.1 L460.3 443.0 L460.9 447.5 L461.6 444.1 L462.2 442.1 L462.8 444.9 L463.5 444.6 L464.1 449.4 L464.7 448.2 L465.4 448.6 L466.0 445.7 L466.7 444.1 L467.3 446.5 L467.9 443.9 L468.6 444.4 L469.2 441.6 L469.8 444.2 L470.5 448.8 L471.1 446.7 L471.7 448.2 L472.4 443.6 L473.0 445.2 L473.7 444.7 L474.3 435.4 L474.9 439.8 L475.6 441.0 L476.2 436.1 L476.8 439.3 L477.5 445.3 L478.1 443.2 L478.8 447.5 L479.4 447.2 L480.0 449.3 L480.7 446.0 L481.3 447.2 L481.3 457.0 Z" fill="#41a5b1"/>
</g></g>
<rect x="461.80" y="407.30" width="0.6" height="2.40" fill="#4c9ea8"/>
<rect x="463.15" y="405.90" width="0.6" height="5.20" fill="#4c9ea8"/>
<rect x="464.50" y="404.70" width="0.6" height="7.60" fill="#4c9ea8"/>
<rect x="465.85" y="403.50" width="0.6" height="10.00" fill="#4c9ea8"/>
<rect x="467.20" y="404.90" width="0.6" height="7.20" fill="#4c9ea8"/>
<rect x="468.55" y="403.90" width="0.6" height="9.20" fill="#4c9ea8"/>
<rect x="469.90" y="405.90" width="0.6" height="5.20" fill="#4c9ea8"/>
<rect x="471.25" y="407.30" width="0.6" height="2.40" fill="#4c9ea8"/>
<clipPath id="nc457_401"><rect x="457.1" y="401" width="22.19999999999999" height="14"/></clipPath>
<text x="472.6" y="410.6" font-size="6.8" fill="#ececec" font-family="Liberation Sans" clip-path="url(#nc457_401)">…</text>
<g><clipPath id="c493_401"><rect x="493.2" y="401" width="36.30000000000001" height="56" rx="2"/></clipPath>
<g clip-path="url(#c493_401)">
<rect x="493.2" y="401" width="36.30000000000001" height="56" fill="#083e48"/>
<ellipse cx="511.35" cy="456" rx="18.5" ry="30.8" fill="#0e5561"/>
<rect x="493.2" y="401" width="36.30000000000001" height="28" fill="#145f6b"/>
<rect x="493.2" y="434.0" width="36.30000000000001" height="1.2" fill="#4aa8b3" opacity="0.9"/>
<path d="M493.2 457.0 L493.2 448.6 L493.8 449.0 L494.5 450.0 L495.1 446.8 L495.7 449.9 L496.3 446.7 L497.0 443.7 L497.6 447.6 L498.2 444.0 L498.8 443.2 L499.5 447.6 L500.1 446.3 L500.7 445.3 L501.3 447.5 L502.0 447.0 L502.6 449.9 L503.2 448.4 L503.8 447.8 L504.5 444.1 L505.1 439.6 L505.7 440.5 L506.3 437.7 L507.0 442.4 L507.6 441.3 L508.2 447.0 L508.8 446.6 L509.5 442.5 L510.1 440.3 L510.7 441.0 L511.4 442.4 L512.0 439.3 L512.6 440.8 L513.2 441.7 L513.9 439.1 L514.5 445.2 L515.1 442.5 L515.7 444.6 L516.4 448.5 L517.0 445.6 L517.6 443.8 L518.2 446.1 L518.9 443.0 L519.5 440.8 L520.1 447.1 L520.7 445.2 L521.4 448.8 L522.0 447.6 L522.6 446.3 L523.2 448.8 L523.9 449.2 L524.5 448.3 L525.1 445.0 L525.7 448.6 L526.4 448.7 L527.0 447.3 L527.6 446.1 L528.2 448.8 L528.9 448.9 L529.5 447.8 L529.5 457.0 Z" fill="#41a5b1"/>
</g></g>
<rect x="497.90" y="407.30" width="0.6" height="2.40" fill="#4c9ea8"/>
<rect x="499.25" y="405.90" width="0.6" height="5.20" fill="#4c9ea8"/>
<rect x="500.60" y="404.70" width="0.6" height="7.60" fill="#4c9ea8"/>
<rect x="501.95" y="403.50" width="0.6" height="10.00" fill="#4c9ea8"/>
<rect x="503.30" y="404.90" width="0.6" height="7.20" fill="#4c9ea8"/>
<rect x="504.65" y="403.90" width="0.6" height="9.20" fill="#4c9ea8"/>
<rect x="506.00" y="405.90" width="0.6" height="5.20" fill="#4c9ea8"/>
<rect x="507.35" y="407.30" width="0.6" height="2.40" fill="#4c9ea8"/>
<clipPath id="nc493_401"><rect x="493.2" y="401" width="34.30000000000001" height="14"/></clipPath>
<text x="508.7" y="410.6" font-size="6.8" fill="#ececec" font-family="Liberation Sans" clip-path="url(#nc493_401)">Altu…</text>
<g><clipPath id="c562_401"><rect x="562.7" y="401" width="100.89999999999998" height="56" rx="2"/></clipPath>
<g clip-path="url(#c562_401)">
<rect x="562.7" y="401" width="100.89999999999998" height="56" fill="#083e48"/>
<ellipse cx="613.15" cy="456" rx="50.5" ry="30.7" fill="#0e5561"/>
<rect x="562.7" y="401" width="100.89999999999998" height="28" fill="#145f6b"/>
<rect x="562.7" y="438.9" width="100.89999999999998" height="1.2" fill="#4aa8b3" opacity="0.9"/>
<path d="M562.7 457.0 L562.7 454.1 L563.3 453.7 L564.0 452.9 L564.6 453.5 L565.2 453.2 L565.8 452.9 L566.5 453.6 L567.1 452.8 L567.7 452.5 L568.3 452.1 L569.0 453.6 L569.6 453.1 L570.2 453.6 L570.8 452.2 L571.5 452.6 L572.1 454.0 L572.7 452.3 L573.4 452.6 L574.0 453.3 L574.6 453.6 L575.2 454.5 L575.9 454.9 L576.5 454.4 L577.1 455.1 L577.7 455.1 L578.4 455.2 L579.0 455.5 L579.6 455.2 L580.2 455.3 L580.9 455.0 L581.5 455.3 L582.1 455.2 L582.8 455.3 L583.4 455.1 L584.0 455.2 L584.6 455.2 L585.3 454.3 L585.9 454.1 L586.5 454.1 L587.1 454.0 L587.8 454.4 L588.4 454.3 L589.0 454.1 L589.6 454.3 L590.3 452.9 L590.9 453.4 L591.5 452.3 L592.2 453.1 L592.8 451.9 L593.4 452.0 L594.0 453.8 L594.7 453.3 L595.3 451.9 L595.9 452.9 L596.5 451.9 L597.2 453.2 L597.8 454.0 L598.4 453.1 L599.0 453.0 L599.7 454.1 L600.3 454.5 L600.9 454.3 L601.6 453.7 L602.2 454.2 L602.8 455.1 L603.4 455.1 L604.1 455.4 L604.7 455.5 L605.3 455.0 L605.9 455.6 L606.6 455.3 L607.2 455.4 L607.8 455.6 L608.4 455.1 L609.1 455.5 L609.7 454.9 L610.3 455.3 L611.0 454.9 L611.6 455.0 L612.2 454.7 L612.8 453.6 L613.5 453.6 L614.1 454.1 L614.7 453.0 L615.3 453.9 L616.0 453.4 L616.6 452.4 L617.2 452.7 L617.9 453.7 L618.5 451.7 L619.1 453.3 L619.7 453.2 L620.4 452.1 L621.0 453.1 L621.6 453.3 L622.2 453.8 L622.9 453.9 L623.5 453.1 L624.1 453.9 L624.7 453.4 L625.4 454.0 L626.0 454.1 L626.6 453.6 L627.3 454.4 L627.9 454.5 L628.5 454.4 L629.1 455.3 L629.8 455.4 L630.4 454.8 L631.0 455.0 L631.6 455.5 L632.3 455.6 L632.9 455.1 L633.5 454.9 L634.1 455.5 L634.8 454.7 L635.4 454.6 L636.0 454.8 L636.7 454.8 L637.3 455.0 L637.9 454.9 L638.5 453.4 L639.2 454.3 L639.8 453.4 L640.4 453.9 L641.0 452.7 L641.7 453.0 L642.3 453.4 L642.9 453.6 L643.5 452.3 L644.2 453.7 L644.8 453.3 L645.4 452.6 L646.1 452.0 L646.7 452.6 L647.3 453.4 L647.9 452.2 L648.6 453.7 L649.2 454.2 L649.8 453.9 L650.4 453.8 L651.1 454.6 L651.7 454.6 L652.3 454.5 L652.9 454.4 L653.6 455.1 L654.2 455.0 L654.8 454.6 L655.5 454.7 L656.1 455.1 L656.7 455.1 L657.3 455.3 L658.0 455.6 L658.6 455.7 L659.2 455.7 L659.8 454.8 L660.5 454.9 L661.1 454.5 L661.7 455.3 L662.3 454.4 L663.0 454.4 L663.6 453.9 L663.6 457.0 Z" fill="#41a5b1"/>
</g></g>
<rect x="567.40" y="407.30" width="0.6" height="2.40" fill="#4c9ea8"/>
<rect x="568.75" y="405.90" width="0.6" height="5.20" fill="#4c9ea8"/>
<rect x="570.10" y="404.70" width="0.6" height="7.60" fill="#4c9ea8"/>
<rect x="571.45" y="403.50" width="0.6" height="10.00" fill="#4c9ea8"/>
<rect x="572.80" y="404.90" width="0.6" height="7.20" fill="#4c9ea8"/>
<rect x="574.15" y="403.90" width="0.6" height="9.20" fill="#4c9ea8"/>
<rect x="575.50" y="405.90" width="0.6" height="5.20" fill="#4c9ea8"/>
<rect x="576.85" y="407.30" width="0.6" height="2.40" fill="#4c9ea8"/>
<clipPath id="nc562_401"><rect x="562.7" y="401" width="98.89999999999998" height="14"/></clipPath>
<text x="578.2" y="410.6" font-size="6.8" fill="#ececec" font-family="Liberation Sans" clip-path="url(#nc562_401)">Reloj</text>
<g><clipPath id="c118_459"><rect x="118.6" y="459.5" width="118.4" height="55.799999999999955" rx="2"/></clipPath>
<g clip-path="url(#c118_459)">
<rect x="118.6" y="459.5" width="118.4" height="55.799999999999955" fill="#3a5a9e"/>
<rect x="118.6" y="490" width="118.4" height="25.299999999999955" fill="#223f7e"/>
<rect x="118.6" y="489.5" width="118.4" height="1.1" fill="#87a6e2"/>
<path d="M118.6 515.3 L118.6 509.1 L119.2 508.2 L119.9 508.7 L120.5 508.0 L121.1 507.9 L121.7 509.6 L122.4 500.0 L123.0 492.8 L123.6 497.7 L124.2 497.8 L124.9 491.2 L125.5 495.8 L126.1 492.8 L126.7 496.1 L127.4 494.9 L128.0 499.3 L128.6 495.6 L129.2 494.1 L129.9 497.2 L130.5 495.9 L131.1 496.9 L131.8 501.7 L132.4 497.0 L133.0 498.6 L133.6 500.9 L134.3 502.9 L134.9 497.5 L135.5 500.2 L136.1 498.7 L136.8 497.6 L137.4 498.7 L138.0 497.2 L138.6 500.5 L139.3 497.5 L139.9 499.7 L140.5 495.9 L141.2 495.9 L141.8 501.3 L142.4 500.7 L143.0 499.8 L143.7 493.5 L144.3 497.3 L144.9 495.5 L145.5 497.9 L146.2 495.9 L146.8 496.7 L147.4 496.9 L148.0 494.8 L148.7 494.8 L149.3 492.0 L149.9 494.1 L150.5 492.1 L151.2 505.9 L151.8 505.4 L152.4 506.5 L153.1 508.4 L153.7 505.9 L154.3 497.9 L154.9 498.3 L155.6 500.4 L156.2 499.5 L156.8 502.7 L157.4 498.7 L158.1 500.4 L158.7 502.2 L159.3 503.6 L159.9 498.6 L160.6 497.7 L161.2 503.5 L161.8 498.9 L162.5 501.4 L163.1 503.1 L163.7 502.2 L164.3 499.1 L165.0 498.5 L165.6 503.8 L166.2 497.2 L166.8 501.2 L167.5 495.6 L168.1 498.3 L168.7 493.5 L169.3 492.3 L170.0 496.0 L170.6 491.5 L171.2 497.3 L171.8 499.2 L172.5 494.6 L173.1 499.6 L173.7 498.2 L174.4 496.5 L175.0 495.0 L175.6 499.1 L176.2 500.3 L176.9 493.8 L177.5 498.6 L178.1 493.9 L178.7 494.9 L179.4 499.2 L180.0 498.9 L180.6 503.0 L181.2 503.3 L181.9 504.4 L182.5 505.4 L183.1 506.1 L183.8 505.9 L184.4 508.3 L185.0 509.3 L185.6 509.5 L186.3 511.4 L186.9 512.0 L187.5 511.1 L188.1 511.8 L188.8 511.7 L189.4 512.6 L190.0 511.9 L190.6 511.7 L191.3 512.5 L191.9 511.6 L192.5 511.6 L193.1 512.5 L193.8 504.2 L194.4 505.0 L195.0 504.0 L195.7 505.5 L196.3 503.9 L196.9 493.4 L197.5 499.7 L198.2 499.5 L198.8 494.4 L199.4 495.7 L200.0 500.8 L200.7 499.3 L201.3 498.3 L201.9 500.3 L202.5 500.0 L203.2 500.3 L203.8 499.9 L204.4 503.2 L205.1 504.7 L205.7 504.3 L206.3 502.3 L206.9 506.1 L207.6 503.3 L208.2 502.4 L208.8 504.6 L209.4 505.1 L210.1 502.1 L210.7 505.0 L211.3 501.7 L211.9 499.8 L212.6 497.6 L213.2 501.6 L213.8 499.6 L214.4 499.2 L215.1 494.9 L215.7 497.6 L216.3 493.9 L217.0 499.2 L217.6 497.6 L218.2 494.7 L218.8 492.4 L219.5 496.0 L220.1 497.9 L220.7 498.8 L221.3 495.3 L222.0 498.3 L222.6 493.2 L223.2 493.2 L223.8 498.9 L224.5 498.4 L225.1 494.5 L225.7 496.2 L226.4 495.3 L227.0 499.2 L227.6 501.2 L228.2 500.3 L228.9 497.0 L229.5 501.0 L230.1 500.7 L230.7 500.4 L231.4 500.6 L232.0 500.7 L232.6 497.4 L233.2 502.4 L233.9 503.4 L234.5 496.9 L235.1 497.0 L235.7 496.0 L236.4 499.6 L237.0 495.5 L237.0 515.3 Z" fill="#7f9fe0"/>
</g></g>
<g fill="none" stroke="#8fa6d8" stroke-width="0.8"><rect x="126.0" y="462.9" width="3.2" height="5.6" rx="1.6"/><path d="M124.6 466.5 Q124.6 470.0 127.6 470.0 Q130.6 470.0 130.6 466.5 M127.6 470.0 V472.0 M125.6 472.0 H129.6"/></g>
<text x="135.1" y="469.1" font-size="6.8" fill="#ececec" font-family="Liberation Sans">Voz en off 1</text>
<g><clipPath id="c342_459"><rect x="342.6" y="459.2" width="201.69999999999993" height="56.099999999999966" rx="2"/></clipPath>
<g clip-path="url(#c342_459)">
<rect x="342.6" y="459.2" width="201.69999999999993" height="56.099999999999966" fill="#083e48"/>
<rect x="342.6" y="459.2" width="201.69999999999993" height="27.100000000000023" fill="#145f6b"/>
<rect x="342.6" y="492.09999999999997" width="201.69999999999993" height="1.2" fill="#4aa8b3" opacity="0.9"/>
<path d="M342.6 515.3 L342.6 514.4 L343.2 514.3 L343.9 513.9 L344.5 514.0 L345.1 513.9 L345.7 513.4 L346.4 512.7 L347.0 512.7 L347.6 512.5 L348.2 513.0 L348.9 512.4 L349.5 512.6 L350.1 512.6 L350.7 512.6 L351.4 512.3 L352.0 510.8 L352.6 510.8 L353.2 510.6 L353.9 510.4 L354.5 511.6 L355.1 511.2 L355.8 510.3 L356.4 509.8 L357.0 509.3 L357.6 509.0 L358.3 511.0 L358.9 509.4 L359.5 509.0 L360.1 509.3 L360.8 510.2 L361.4 509.1 L362.0 510.1 L362.6 507.2 L363.3 507.2 L363.9 508.1 L364.5 508.8 L365.2 506.4 L365.8 507.5 L366.4 506.1 L367.0 506.0 L367.7 507.2 L368.3 507.4 L368.9 506.5 L369.5 507.0 L370.2 508.0 L370.8 507.2 L371.4 504.8 L372.0 508.1 L372.7 508.0 L373.3 505.1 L373.9 506.6 L374.5 505.2 L375.2 505.3 L375.8 505.8 L376.4 502.2 L377.1 506.3 L377.7 504.9 L378.3 505.9 L378.9 503.4 L379.6 505.2 L380.2 504.6 L380.8 502.1 L381.4 504.5 L382.1 502.9 L382.7 500.6 L383.3 505.4 L383.9 505.5 L384.6 504.3 L385.2 500.6 L385.8 501.4 L386.4 503.8 L387.1 503.0 L387.7 503.9 L388.3 501.8 L389.0 504.5 L389.6 499.7 L390.2 498.1 L390.8 497.5 L391.5 498.9 L392.1 497.0 L392.7 503.9 L393.3 501.7 L394.0 496.3 L394.6 497.6 L395.2 500.3 L395.8 495.9 L396.5 498.3 L397.1 495.3 L397.7 499.8 L398.3 500.7 L399.0 498.5 L399.6 501.2 L400.2 499.0 L400.9 494.0 L401.5 499.5 L402.1 502.3 L402.7 502.0 L403.4 500.9 L404.0 495.6 L404.6 499.2 L405.2 499.8 L405.9 501.5 L406.5 493.9 L407.1 498.7 L407.7 500.9 L408.4 502.3 L409.0 502.5 L409.6 501.8 L410.3 497.9 L410.9 502.3 L411.5 503.3 L412.1 500.0 L412.8 502.0 L413.4 496.6 L414.0 503.3 L414.6 500.5 L415.3 499.0 L415.9 501.8 L416.5 497.9 L417.1 501.6 L417.8 503.4 L418.4 502.4 L419.0 505.1 L419.6 502.7 L420.3 504.0 L420.9 500.0 L421.5 500.6 L422.2 502.9 L422.8 505.9 L423.4 504.7 L424.0 504.9 L424.7 505.2 L425.3 505.2 L425.9 501.6 L426.5 506.0 L427.2 506.6 L427.8 501.8 L428.4 504.0 L429.0 501.8 L429.7 505.2 L430.3 502.7 L430.9 504.1 L431.5 503.5 L432.2 503.9 L432.8 505.3 L433.4 507.4 L434.1 507.0 L434.7 503.9 L435.3 503.9 L435.9 503.9 L436.6 506.8 L437.2 505.4 L437.8 504.9 L438.4 505.7 L439.1 505.1 L439.7 506.5 L440.3 506.0 L440.9 506.0 L441.6 507.9 L442.2 505.3 L442.8 505.3 L443.4 508.9 L444.1 505.5 L444.7 505.6 L445.3 506.9 L446.0 509.4 L446.6 506.2 L447.2 509.2 L447.8 506.2 L448.5 507.4 L449.1 509.7 L449.7 509.4 L450.3 507.8 L451.0 508.1 L451.6 507.6 L452.2 507.1 L452.8 509.5 L453.5 510.3 L454.1 507.4 L454.7 510.4 L455.4 507.7 L456.0 510.2 L456.6 508.1 L457.2 508.3 L457.9 508.1 L458.5 509.1 L459.1 508.2 L459.7 510.3 L460.4 509.0 L461.0 510.0 L461.6 508.5 L462.2 508.9 L462.9 509.8 L463.5 509.8 L464.1 511.2 L464.7 511.2 L465.4 509.8 L466.0 510.1 L466.6 509.2 L467.3 509.9 L467.9 511.2 L468.5 510.7 L469.1 509.7 L469.8 510.4 L470.4 511.7 L471.0 509.7 L471.6 509.8 L472.3 511.6 L472.9 510.6 L473.5 511.0 L474.1 510.2 L474.8 511.3 L475.4 511.5 L476.0 511.0 L476.6 510.0 L477.3 511.9 L477.9 511.9 L478.5 510.9 L479.2 510.4 L479.8 511.2 L480.4 511.4 L481.0 510.6 L481.7 510.8 L482.3 512.2 L482.9 510.7 L483.5 512.1 L484.2 511.9 L484.8 510.9 L485.4 511.8 L486.0 511.1 L486.7 512.3 L487.3 511.1 L487.9 512.3 L488.6 512.4 L489.2 511.8 L489.8 512.2 L490.4 511.8 L491.1 511.3 L491.7 511.6 L492.3 512.8 L492.9 512.4 L493.6 512.0 L494.2 512.1 L494.8 511.8 L495.4 512.2 L496.1 512.9 L496.7 512.6 L497.3 511.7 L497.9 512.5 L498.6 511.9 L499.2 511.6 L499.8 512.2 L500.5 512.2 L501.1 512.3 L501.7 512.7 L502.3 511.9 L503.0 512.6 L503.6 512.0 L504.2 512.8 L504.8 512.1 L505.5 512.2 L506.1 512.5 L506.7 512.8 L507.3 513.2 L508.0 512.4 L508.6 512.9 L509.2 512.6 L509.8 513.3 L510.5 513.3 L511.1 513.3 L511.7 512.5 L512.4 513.3 L513.0 512.4 L513.6 513.1 L514.2 512.9 L514.9 513.1 L515.5 512.9 L516.1 513.5 L516.7 513.1 L517.4 512.6 L518.0 513.4 L518.6 512.9 L519.2 513.3 L519.9 513.3 L520.5 513.7 L521.1 513.7 L521.7 512.7 L522.4 512.9 L523.0 512.9 L523.6 512.9 L524.3 512.8 L524.9 513.6 L525.5 513.2 L526.1 513.3 L526.8 513.2 L527.4 512.9 L528.0 513.1 L528.6 512.9 L529.3 513.7 L529.9 513.2 L530.5 513.2 L531.1 513.2 L531.8 513.3 L532.4 513.1 L533.0 513.6 L533.7 513.1 L534.3 513.6 L534.9 513.4 L535.5 513.2 L536.2 513.3 L536.8 513.7 L537.4 513.8 L538.0 513.7 L538.7 513.5 L539.3 513.2 L539.9 513.3 L540.5 513.7 L541.2 513.7 L541.8 513.4 L542.4 513.8 L543.0 513.7 L543.7 514.1 L544.3 513.9 L544.3 515.3 Z" fill="#41a5b1"/>
</g></g>
<rect x="354.30" y="465.50" width="0.6" height="2.40" fill="#4c9ea8"/>
<rect x="355.65" y="464.10" width="0.6" height="5.20" fill="#4c9ea8"/>
<rect x="357.00" y="462.90" width="0.6" height="7.60" fill="#4c9ea8"/>
<rect x="358.35" y="461.70" width="0.6" height="10.00" fill="#4c9ea8"/>
<rect x="359.70" y="463.10" width="0.6" height="7.20" fill="#4c9ea8"/>
<rect x="361.05" y="462.10" width="0.6" height="9.20" fill="#4c9ea8"/>
<rect x="362.40" y="464.10" width="0.6" height="5.20" fill="#4c9ea8"/>
<rect x="363.75" y="465.50" width="0.6" height="2.40" fill="#4c9ea8"/>
<clipPath id="nc342_459"><rect x="342.6" y="459.2" width="199.69999999999993" height="14"/></clipPath>
<text x="365.1" y="468.8" font-size="6.8" fill="#ececec" font-family="Liberation Sans" clip-path="url(#nc342_459)">Efecto zumbido</text>
<g><clipPath id="c604_459"><rect x="604.6" y="459.4" width="66.39999999999998" height="56.200000000000045" rx="2"/></clipPath>
<g clip-path="url(#c604_459)">
<rect x="604.6" y="459.4" width="66.39999999999998" height="56.200000000000045" fill="#2a672b"/>
<rect x="604.6" y="459.4" width="66.39999999999998" height="27.80000000000001" fill="#3b7e39"/>
<rect x="604.6" y="494.79999999999995" width="66.39999999999998" height="1.2" fill="#8fcf8b" opacity="0.9"/>
<path d="M604.6 515.6 L604.6 505.7 L605.2 505.6 L605.9 507.0 L606.5 508.0 L607.1 509.1 L607.7 506.3 L608.4 502.6 L609.0 500.7 L609.6 503.3 L610.2 500.9 L610.9 504.3 L611.5 501.2 L612.1 501.9 L612.7 504.0 L613.4 503.4 L614.0 502.7 L614.6 505.6 L615.2 503.4 L615.9 501.7 L616.5 504.7 L617.1 501.0 L617.8 501.4 L618.4 499.8 L619.0 502.9 L619.6 504.2 L620.3 498.8 L620.9 498.4 L621.5 500.9 L622.1 503.5 L622.8 502.7 L623.4 499.4 L624.0 502.1 L624.6 497.4 L625.3 500.3 L625.9 503.4 L626.5 500.3 L627.2 502.6 L627.8 498.7 L628.4 498.9 L629.0 501.6 L629.7 500.5 L630.3 499.9 L630.9 498.8 L631.5 497.1 L632.2 503.9 L632.8 500.9 L633.4 498.6 L634.0 500.7 L634.7 498.0 L635.3 502.0 L635.9 495.1 L636.5 498.1 L637.2 501.7 L637.8 497.1 L638.4 500.3 L639.1 501.5 L639.7 499.3 L640.3 502.3 L640.9 501.9 L641.6 496.8 L642.2 498.2 L642.8 503.6 L643.4 497.3 L644.1 503.3 L644.7 502.1 L645.3 505.5 L645.9 509.6 L646.6 510.7 L647.2 510.7 L647.8 510.9 L648.4 511.8 L649.1 510.0 L649.7 512.3 L650.3 511.7 L651.0 511.2 L651.6 512.1 L652.2 511.2 L652.8 512.6 L653.5 511.6 L654.1 511.9 L654.7 512.4 L655.3 512.3 L656.0 513.0 L656.6 512.6 L657.2 512.8 L657.8 513.3 L658.5 513.4 L659.1 513.3 L659.7 513.7 L660.4 514.1 L661.0 513.5 L661.6 514.1 L662.2 513.9 L662.9 513.8 L663.5 514.3 L664.1 514.4 L664.7 514.4 L665.4 514.0 L666.0 514.2 L666.6 514.3 L667.2 514.1 L667.9 513.7 L668.5 514.3 L669.1 514.1 L669.7 513.8 L670.4 514.0 L671.0 514.2 L671.0 515.6 Z" fill="#72b86e"/>
</g></g>
<path d="M612.1 471.4 V461.9 Q614.1 462.4 615.1 464.9" stroke="#9fd09c" stroke-width="0.9" fill="none"/><ellipse cx="610.8000000000001" cy="471.4" rx="1.6" ry="1.2" fill="#9fd09c"/>
<clipPath id="nc604_459"><rect x="604.6" y="459.4" width="64.39999999999998" height="14"/></clipPath>
<text x="620.1" y="469.0" font-size="6.8" fill="#ececec" font-family="Liberation Sans" clip-path="url(#nc604_459)">Inercia</text>
<g><clipPath id="c40_517"><rect x="40.7" y="517.7" width="152.7" height="62.299999999999955" rx="2"/></clipPath>
<g clip-path="url(#c40_517)">
<rect x="40.7" y="517.7" width="152.7" height="62.299999999999955" fill="#083e48"/>
<ellipse cx="116.8" cy="573" rx="76" ry="35.8" fill="#125c68"/>
<rect x="40.7" y="517.7" width="152.7" height="27.59999999999991" fill="#145f6b"/>
<rect x="40.7" y="550.6" width="152.7" height="1.2" fill="#4aa8b3" opacity="0.9"/>
</g></g>
<rect x="45.40" y="524.00" width="0.6" height="2.40" fill="#4c9ea8"/>
<rect x="46.75" y="522.60" width="0.6" height="5.20" fill="#4c9ea8"/>
<rect x="48.10" y="521.40" width="0.6" height="7.60" fill="#4c9ea8"/>
<rect x="49.45" y="520.20" width="0.6" height="10.00" fill="#4c9ea8"/>
<rect x="50.80" y="521.60" width="0.6" height="7.20" fill="#4c9ea8"/>
<rect x="52.15" y="520.60" width="0.6" height="9.20" fill="#4c9ea8"/>
<rect x="53.50" y="522.60" width="0.6" height="5.20" fill="#4c9ea8"/>
<rect x="54.85" y="524.00" width="0.6" height="2.40" fill="#4c9ea8"/>
<clipPath id="nc40_517"><rect x="40.7" y="517.7" width="150.7" height="14"/></clipPath>
<text x="56.2" y="527.3000000000001" font-size="6.8" fill="#ececec" font-family="Liberation Sans" clip-path="url(#nc40_517)">Viento nocturno</text>
<rect x="343.4" y="460" width="200.1" height="54.5" rx="2" fill="none" stroke="#e6c619" stroke-width="1.6"/>
<rect x="342.6" y="459.2" width="6" height="56.1" rx="2" fill="#e6c619"/>
<rect x="538.3" y="459.2" width="6" height="56.1" rx="2" fill="#e6c619"/>
<rect x="345.1" y="478" width="1" height="18" fill="#3a3208"/>
<rect x="540.8" y="478" width="1" height="18" fill="#3a3208"/>
<rect x="424.3" y="398" width="1.4" height="160" fill="#858587"/>
<path d="M420.2 387.8 Q420.2 385.8 422.2 385.8 H427.8 Q429.8 385.8 429.8 387.8 V398.5 L425 404 L420.2 398.5 Z" fill="#7c7c7e" fill-opacity="0.85" stroke="#9a9a9c" stroke-width="0.6"/>
</svg><!--/TL-->
  <div class="a" style="left:755.7px;top:458px;width:38.5px;height:50.5px;border-radius:6px;background:#2a2a2c"></div>
  <div class="a" style="left:764.5px;top:461px;width:20px;height:2px;border-radius:1px;background:#7a7a7c"></div>
  <svg class="a" style="left:763.2px;top:474px" width="23" height="23" viewBox="0 0 23 23"><circle cx="11.5" cy="11.5" r="11" fill="#050505"/><circle cx="19.80" cy="11.50" r="0.45" fill="#8a8a8c"/><circle cx="18.69" cy="15.65" r="0.45" fill="#8a8a8c"/><circle cx="15.65" cy="18.69" r="0.45" fill="#8a8a8c"/><circle cx="11.50" cy="19.80" r="0.45" fill="#8a8a8c"/><circle cx="7.35" cy="18.69" r="0.45" fill="#8a8a8c"/><circle cx="4.31" cy="15.65" r="0.45" fill="#8a8a8c"/><circle cx="3.20" cy="11.50" r="0.45" fill="#8a8a8c"/><circle cx="4.31" cy="7.35" r="0.45" fill="#8a8a8c"/><circle cx="7.35" cy="4.31" r="0.45" fill="#8a8a8c"/><circle cx="11.50" cy="3.20" r="0.45" fill="#8a8a8c"/><circle cx="15.65" cy="4.31" r="0.45" fill="#8a8a8c"/><circle cx="18.69" cy="7.35" r="0.45" fill="#8a8a8c"/><path d="M9.4 8.3 Q9.4 7 10.7 7 H12.3 Q13.6 7 13.6 8.3 V13.3 L11.5 16 L9.4 13.3 Z" fill="#fff"/><rect x="2.5" y="11" width="2.2" height="1" fill="#bbb"/></svg>

  <!-- bottom bar -->
  <div class="a" style="left:30px;top:558px;width:766px;height:46px;background:#1e1e20"></div>
  <div class="a" style="left:39px;top:563.5px;width:72.5px;height:18px;border-radius:3px;background:#2c2c2e"></div>
  <div class="a" style="left:116px;top:563.5px;width:59px;height:18px;border-radius:3px;background:#2c2c2e"></div>
  <div class="a" style="left:180px;top:563.5px;width:52px;height:18px;border-radius:3px;background:#2c2c2e"></div>
  <div class="a" style="left:237px;top:563.5px;width:61px;height:18px;border-radius:3px;background:#2c2c2e"></div>
  <svg class="a" style="left:43px;top:566px" width="12" height="12" viewBox="0 0 12 12"><rect x="1" y="1" width="10" height="4.5" rx="2.25" fill="#e6e6e6"/><rect x="1" y="6.5" width="10" height="4.5" rx="2.25" fill="#e6e6e6"/><circle cx="3.5" cy="3.25" r="1.6" fill="#2c2c2e"/><circle cx="8.5" cy="8.75" r="1.6" fill="#2c2c2e"/></svg>
  <div class="t" style="left:58px;top:568.5px;font-size:8.6px;color:#e6e6e6">Inspeccionar</div>
  <svg class="a" style="left:121px;top:566px" width="13" height="12" viewBox="0 0 13 12" fill="none" stroke="#e6e6e6" stroke-width="1"><path d="M1 4 H3.5 L7 1.5 V10.5 L3.5 8 H1 Z"/><path d="M9 4 Q10 6 9 8 M10.8 2.8 Q12.5 6 10.8 9.2"/></svg>
  <div class="t" style="left:137px;top:568.5px;font-size:8.6px;color:#e6e6e6">Volumen</div>
  <svg class="a" style="left:184px;top:566px" width="14" height="12" viewBox="0 0 14 12" fill="none" stroke="#e6e6e6" stroke-width="1"><path d="M3 1 L1 6 L3 11 M5.5 1 L3.5 6 L5.5 11 M8 1 L12.5 6 L8 11 L6 6 Z"/></svg>
  <div class="t" style="left:200px;top:568.5px;font-size:8.6px;color:#e6e6e6">Animar</div>
  <svg class="a" style="left:242px;top:566px" width="12" height="12" viewBox="0 0 12 12" fill="none" stroke="#e6e6e6" stroke-width="1"><rect x="1" y="1" width="4.2" height="4.2" rx="0.6"/><rect x="6.8" y="1" width="4.2" height="4.2" rx="0.6"/><rect x="1" y="6.8" width="4.2" height="4.2" rx="0.6"/><rect x="6.8" y="6.8" width="4.2" height="4.2" rx="0.6"/></svg>
  <div class="t" style="left:257px;top:568.5px;font-size:8.6px;color:#e6e6e6">Multicam</div>
  <svg class="a" style="left:679px;top:565px" width="12" height="15" viewBox="0 0 12 15" fill="none" stroke="#c8c8c8" stroke-width="1.1"><path d="M1 3 H11 M4 3 V1.5 H8 V3 M2 3 L2.8 13.5 H9.2 L10 3 M4.5 5 V12 M6 5 V12 M7.5 5 V12"/></svg>
  <svg class="a" style="left:705px;top:563px" width="18" height="18" viewBox="0 0 18 18" fill="none" stroke="#c8c8c8" stroke-width="1" stroke-linejoin="round"><path d="M8 15.5 H2.8 Q1.5 15.5 1.5 14.2 V8 Q1.5 6.2 3 5.2 L4 4.4 V3 Q4 1.6 5 1.6 Q6 1.6 6 3 V4.4 L7 5.2 Q7.6 5.6 8 6.2"/><path d="M10 15.5 H15.2 Q16.5 15.5 16.5 14.2 V8 Q16.5 6.2 15 5.2 L14 4.4 V3 Q14 1.6 13 1.6 Q12 1.6 12 3 V4.4 L11 5.2 Q10.4 5.6 10 6.2"/><path d="M9 17.5 V9.5 M7.2 11.3 L9 9.5 L10.8 11.3 M6.5 15 L9 6 L11.5 15"/></svg>
  <svg class="a" style="left:735px;top:564px" width="18" height="16" viewBox="0 0 18 16" fill="none" stroke="#c8c8c8" stroke-width="1.1"><path d="M10 1 V15"/><path d="M10 2.5 H15.5 Q16.5 2.5 16.5 3.5 V12.5 Q16.5 13.5 15.5 13.5 H10"/><path d="M1.5 3 V13 M1.5 2.5 H6 M1.5 13.5 H6" stroke-dasharray="1.6 1.2"/><path d="M3.5 8 H8 M6 6 L8 8 L6 10"/></svg>
  <svg class="a" style="left:765px;top:564px" width="18" height="16" viewBox="0 0 18 16" fill="none" stroke="#c8c8c8" stroke-width="1.1"><path d="M8 1 V15"/><path d="M8 2.5 H2.5 Q1.5 2.5 1.5 3.5 V12.5 Q1.5 13.5 2.5 13.5 H8"/><path d="M16.5 3 V13 M16.5 2.5 H12 M16.5 13.5 H12" stroke-dasharray="1.6 1.2"/><path d="M14.5 8 H10 M12 6 L10 8 L12 10"/></svg>
  <svg class="a" style="left:784px;top:592px" width="12" height="11" viewBox="0 0 12 11"><path d="M10.5 1.5 Q10 8.5 2 9.5" stroke="#fff" stroke-width="2" fill="none" stroke-linecap="round"/></svg>

</div>
</body></html>
